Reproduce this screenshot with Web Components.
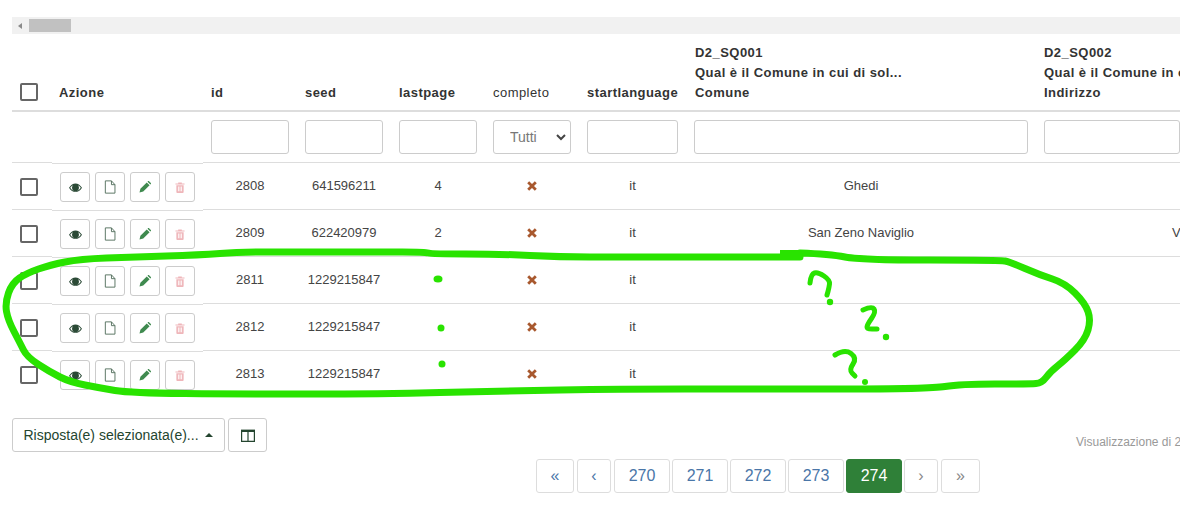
<!DOCTYPE html>
<html lang="it">
<head>
<meta charset="utf-8">
<title>Risposte</title>
<style>
  html, body { margin: 0; height: 514px; overflow: hidden; background: #fff; }
  body { font: 13px "Liberation Sans", Arial, sans-serif; color: #444; }
</style>
</head>
<body>
<survey-page>
  <response-table>
    <response-row rid="2808" seed="641596211" lastpage="4" comune="Ghedi"></response-row>
    <response-row rid="2809" seed="622420979" lastpage="2" comune="San Zeno Naviglio" indirizzo="V"></response-row>
    <response-row rid="2811" seed="1229215847"></response-row>
    <response-row rid="2812" seed="1229215847"></response-row>
    <response-row rid="2813" seed="1229215847"></response-row>
  </response-table>
  <table-tools></table-tools>
  <page-nav></page-nav>
  <green-scribble></green-scribble>
</survey-page>

<script>
// shared icons, all drawn on a 24 box
const ICONS = {
  eye: `<svg width="13" height="13" viewBox="0 0 24 24"><path fill="#2b4a36" fill-rule="evenodd" d="M0 12.5C3.5 7 7.5 4.500 12 4.500s8.500 2.500 12 8c-3.500 5.500-7.500 8-12 8s-8.500-2.500-12-8zm2.200 0c2.800 4 6 6.200 9.800 6.200s7-2.200 9.800-6.200c-1.500-2.200-3.200-3.800-5-4.800 1 1.200 1.600 2.900 1.600 4.600 0 3.800-2.800 6.300-6.400 6.300s-6.400-2.500-6.400-6.300c0-1.700.6-3.400 1.600-4.600-1.800 1-3.500 2.600-5 4.800z"/></svg>`,
  file: `<svg width="12" height="14" viewBox="0 0 20 24"><path fill="none" stroke="#54705e" stroke-width="1.600" d="M2 1.500h10.500L18.500 8v14.500H2zM12.500 1.500V8h6"/></svg>`,
  pencil: `<svg width="12" height="12" viewBox="0 0 24 24"><path fill="#3f8a4f" d="M1 23l1.800-7.500L15.500 2.800l5.700 5.700L8.500 21.200zM17 1.300l1-1a1.500 1.500 0 0 1 2.100 0l3.600 3.600a1.500 1.500 0 0 1 0 2.100l-1 1z"/></svg>`,
  trash: `<svg width="10" height="11" viewBox="0 0 22 24"><path fill="#efb6ba" fill-rule="evenodd" d="M7 3V1h8v2h6v2.500H1V3zM3 7h16v15a2 2 0 0 1-2 2H5a2 2 0 0 1-2-2zm3.500 3v10.500h1.800V10zm3.600 0v10.500h1.800V10zm3.600 0v10.500h1.800V10z"/></svg>`,
  cross: `<svg width="10" height="10" viewBox="0 0 10 10"><path stroke="#a8582e" stroke-width="2.800" d="M1.200 1.200l7.600 7.600M8.800 1.200L1.200 8.800"/></svg>`,
  columns: `<svg width="14" height="13" viewBox="0 0 14 13"><path fill="none" stroke="#24452f" stroke-width="1.200" d="M.6 2h12.800v10.400H.6zM7 2v10.400"/><path fill="#24452f" d="M0 .6h14v2.400H0z"/></svg>`
};

// grid columns are shared by the header, filter and data rows
const COLS = '40px 151px 92px 94px 94px 94px 107px 350px 146px';

class FakeCheck extends HTMLElement {
  connectedCallback() {
    this.attachShadow({mode: 'open'}).innerHTML = `<style>
      :host { display: block; width: 18px; height: 18px; box-sizing: border-box; border: 2px solid #666; border-radius: 2px; background: #fff; }
    </style>`;
  }
}
customElements.define('fake-check', FakeCheck);

class HScrollbar extends HTMLElement {
  connectedCallback() {
    this.attachShadow({mode: 'open'}).innerHTML = `<style>
      :host { display: flex; align-items: center; height: 17px; background: #f1f1f1; }
      .arrow { width: 0; height: 0; margin-left: 6px; border: 3.500px solid transparent; border-left-width: 0; border-right: 4px solid #8a8a8a; }
      .thumb { width: 42px; height: 13px; margin-left: 7px; background: #c1c1c1; }
    </style><div class="arrow"></div><div class="thumb"></div>`;
  }
}
customElements.define('h-scrollbar', HScrollbar);

class IconButton extends HTMLElement {
  connectedCallback() {
    this.attachShadow({mode: 'open'}).innerHTML = `<style>
      :host { display: flex; align-items: center; justify-content: center; width: 30px; height: 30px; box-sizing: border-box; border: 1px solid #ccc; border-radius: 3px; background: #fff; }
    </style>${ICONS[this.getAttribute('icon')]}`;
  }
}
customElements.define('icon-button', IconButton);

class FilterSelect extends HTMLElement {
  connectedCallback() {
    this.attachShadow({mode: 'open'}).innerHTML = `<style>
      :host { display: block; position: relative; }
      select { display: block; width: 100%; height: 34px; box-sizing: border-box; padding: 0 0 0 16px; border: 1px solid #ccc; border-radius: 3px; background: #fff; appearance: none; color: #777; font: 14px "Liberation Sans", Arial, sans-serif; }
      svg { position: absolute; right: 5px; top: 14px; }
    </style><select><option>Tutti</option></select>
    <svg width="10" height="7" viewBox="0 0 10 7"><path fill="none" stroke="#444" stroke-width="2" d="M1 1l4 4 4-4"/></svg>`;
  }
}
customElements.define('filter-select', FilterSelect);

class ResponseRow extends HTMLElement {
  connectedCallback() {
    const a = n => this.getAttribute(n) || '';
    this.attachShadow({mode: 'open'}).innerHTML = `<style>
      :host { display: grid; grid-template-columns: ${COLS}; height: 47px; font-size: 13px; color: #444; }
      .c { display: flex; align-items: center; justify-content: center; height: 45px; padding: 0 6px 1px 10px; border-top: 1px solid #ddd; }
      .first { justify-content: flex-start; padding: 1px 0 0 8px; }
      .act { display: flex; gap: 5px; height: 47px; box-sizing: border-box; padding: 10px 0 0 8px; background: linear-gradient(#fff 1px, #ddd 1px, #ddd 2px, #fff 2px); }
      .id { padding-left: 8px; }
      .left { justify-content: flex-start; padding-left: 138px; }
    </style>
    <div class="c first"><fake-check></fake-check></div>
    <div class="act"><icon-button icon="eye"></icon-button><icon-button icon="file"></icon-button><icon-button icon="pencil"></icon-button><icon-button icon="trash"></icon-button></div>
    <div class="c id">${a('rid')}</div>
    <div class="c">${a('seed')}</div>
    <div class="c">${a('lastpage')}</div>
    <div class="c">${ICONS.cross}</div>
    <div class="c">it</div>
    <div class="c">${a('comune')}</div>
    <div class="c left">${a('indirizzo')}</div>`;
  }
}
customElements.define('response-row', ResponseRow);

class ResponseTable extends HTMLElement {
  connectedCallback() {
    const q = 'Qual è il Comune in cui di sol...';
    const field = c => `<div class="${c || ''}"><input></div>`;
    this.attachShadow({mode: 'open'}).innerHTML = `<style>
      :host { display: block; margin-left: 12px; width: 1168px; overflow: hidden; }
      .head, .filters { display: grid; grid-template-columns: ${COLS}; }
      .head { height: 76px; border-bottom: 2px solid #ddd; font: bold 13px/20px "Liberation Sans", Arial, sans-serif; letter-spacing: .45px; color: #333; }
      .head > div { align-self: end; padding: 0 0 7px 10px; white-space: nowrap; }
      .head .first { padding: 0 0 9px 8px; }
      .head .plain { font-weight: normal; }
      .head .id { padding-left: 8px; }
      .head .azione { padding-left: 7px; }
      .head .long { padding-left: 11px; }
      .filters { height: 50px; }
      .filters > div { padding: 8px 6px 0 10px; }
      .filters .id { padding-left: 8px; }
      .filters .open { padding-right: 0; }
      input { display: block; width: 100%; height: 34px; box-sizing: border-box; border: 1px solid #ccc; border-radius: 3px; background: #fff; padding: 0 8px; }
    </style>
    <h-scrollbar></h-scrollbar>
    <div class="head">
      <div class="first"><fake-check></fake-check></div>
      <div class="azione">Azione</div>
      <div class="id">id</div>
      <div>seed</div>
      <div>lastpage</div>
      <div class="plain">completo</div>
      <div>startlanguage</div>
      <div class="long">D2_SQ001<br>${q}<br>Comune</div>
      <div>D2_SQ002<br>${q}<br>Indirizzo</div>
    </div>
    <div class="filters">
      <div></div><div></div>
      ${field('id')}${field()}${field()}
      <div><filter-select></filter-select></div>
      ${field()}${field()}${field('open')}
    </div>
    <slot></slot>`;
  }
}
customElements.define('response-table', ResponseTable);

class TableTools extends HTMLElement {
  connectedCallback() {
    this.attachShadow({mode: 'open'}).innerHTML = `<style>
      :host { display: flex; align-items: flex-start; gap: 3px; margin: 21px 0 0 12px; height: 41px; }
      .btn { display: flex; flex: none; align-items: center; justify-content: center; height: 34px; box-sizing: border-box; border: 1px solid #ccc; border-radius: 3px; background: #fff; color: #24452f; font-size: 14px; }
      .menu { width: 213px; gap: 6px; padding-right: 1px; }
      .caret { width: 0; height: 0; border: 4px solid transparent; border-top-width: 0; border-bottom: 4px solid #24452f; }
      .cols { width: 39px; }
      .info { flex: none; margin: 17px 0 0 806px; white-space: nowrap; font-size: 12px; color: #999; }
    </style>
    <div class="btn menu">Risposta(e) selezionata(e)...<span class="caret"></span></div>
    <div class="btn cols">${ICONS.columns}</div>
    <div class="info">Visualizzazione di 2</div>`;
  }
}
customElements.define('table-tools', TableTools);

class PageNav extends HTMLElement {
  connectedCallback() {
    const items = [['«', 38], ['‹', 34, 'wide'], ['270', 56, 'wide'], ['271', 56], ['272', 56], ['273', 56], ['274', 56, 'on'], ['›', 34, 'off'], ['»', 39, 'off wide']];
    this.attachShadow({mode: 'open'}).innerHTML = `<style>
      :host { display: flex; gap: 2px; padding-left: 536px; }
      a { display: flex; flex: none; align-items: center; justify-content: center; height: 34px; box-sizing: border-box; border: 1px solid #ddd; border-radius: 3px; background: #fff; color: #4a76a8; font-size: 16px; }
      .wide { margin-left: 1px; }
      .on { background: #2f8038; border-color: #2f8038; color: #fff; }
      .off { color: #888; }
    </style>` + items.map(i => `<a class="${i[2] || ''}" style="width:${i[1]}px">${i[0]}</a>`).join('');
  }
}
customElements.define('page-nav', PageNav);

// the hand drawn marks lie over the table
class GreenScribble extends HTMLElement {
  connectedCallback() {
    const smooth = p => {
      let d = `M${p[0][0]} ${p[0][1]}`;
      for (let i = 1; i < p.length - 1; i++) {
        const mx = (p[i][0] + p[i + 1][0]) / 2, my = (p[i][1] + p[i + 1][1]) / 2;
        d += `Q${p[i][0]} ${p[i][1]} ${mx} ${my}`;
      }
      const l = p[p.length - 1];
      return d + `L${l[0]} ${l[1]}`;
    };
    const loop = [[800,253],[830,254],[860,260],[1000,260],[1010,262],[1040,275],[1065,283],[1085,303],[1091,320],[1085,340],[1065,360],[1050,372],[1042,383],[1030,384],[960,384],[930,389],[750,389],[620,389],[500,391],[380,394],[240,394],[130,393],[100,388],[70,382],[50,372],[27,357],[20,343],[8,320],[5,303],[12,283],[27,273],[50,265],[80,259],[133,257],[200,255],[240,252],[300,252],[380,252],[425,252],[432,254],[500,254],[560,257],[620,257],[800,257]];
    const marks = [
      [[810,283],[811,274],[818,272],[830,280],[829,288],[827,295]],
      [[863,310],[872,306],[876,312],[867,325],[867,329],[877,329]],
      [[835,355],[845,349],[857,358],[849,370],[855,376]]
    ];
    const dots = [[830,302,3.2,3.2],[886,337,3.2,3.2],[865,382,3,3],[438,279,4.500,3.500],[441,328,3.500,3.500],[442,364,3.500,3.500]];
    this.attachShadow({mode: 'open'}).innerHTML = `<style>
      :host { position: absolute; left: 0; top: 0; width: 1180px; height: 514px; pointer-events: none; }
      svg { display: block; }
    </style>
    <svg width="1180" height="514" fill="none" stroke="#29e300" stroke-linecap="round" stroke-linejoin="round">
      <path stroke-width="7" d="${smooth(loop)}"/>
      <path fill="#29e300" stroke="none" d="M780 250h20l3 5-3 5h-20z"/>
      ${marks.map(m => `<path stroke-width="5" d="${smooth(m)}"/>`).join('')}
      ${dots.map(d => `<ellipse fill="#29e300" stroke="none" cx="${d[0]}" cy="${d[1]}" rx="${d[2]}" ry="${d[3]}"/>`).join('')}
    </svg>`;
  }
}
customElements.define('green-scribble', GreenScribble);

class SurveyPage extends HTMLElement {
  connectedCallback() {
    this.attachShadow({mode: 'open'}).innerHTML = `<style>
      :host { display: block; position: relative; padding-top: 17px; height: 497px; overflow: hidden; }
    </style><slot></slot>`;
  }
}
customElements.define('survey-page', SurveyPage);
</script>
</body>
</html>
